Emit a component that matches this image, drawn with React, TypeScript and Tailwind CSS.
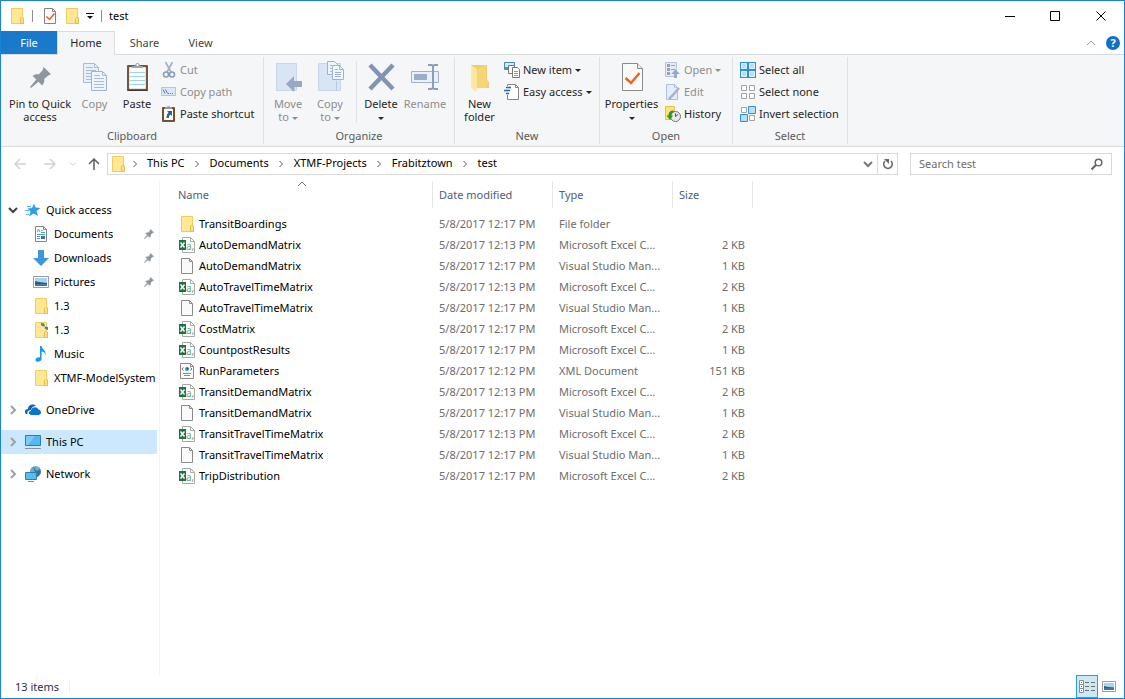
import { useState } from 'react';
import type { ReactNode } from 'react';
import clsx from 'clsx';

type FileKind = 'folder' | 'excel' | 'blank' | 'xml';

const files: { name: string; date: string; type: string; size: string; kind: FileKind }[] = [
    { name: 'TransitBoardings', date: '5/8/2017 12:17 PM', type: 'File folder', size: '', kind: 'folder' },
    { name: 'AutoDemandMatrix', date: '5/8/2017 12:13 PM', type: 'Microsoft Excel C...', size: '2 KB', kind: 'excel' },
    { name: 'AutoDemandMatrix', date: '5/8/2017 12:17 PM', type: 'Visual Studio Man...', size: '1 KB', kind: 'blank' },
    { name: 'AutoTravelTimeMatrix', date: '5/8/2017 12:13 PM', type: 'Microsoft Excel C...', size: '2 KB', kind: 'excel' },
    { name: 'AutoTravelTimeMatrix', date: '5/8/2017 12:17 PM', type: 'Visual Studio Man...', size: '1 KB', kind: 'blank' },
    { name: 'CostMatrix', date: '5/8/2017 12:17 PM', type: 'Microsoft Excel C...', size: '2 KB', kind: 'excel' },
    { name: 'CountpostResults', date: '5/8/2017 12:17 PM', type: 'Microsoft Excel C...', size: '1 KB', kind: 'excel' },
    { name: 'RunParameters', date: '5/8/2017 12:12 PM', type: 'XML Document', size: '151 KB', kind: 'xml' },
    { name: 'TransitDemandMatrix', date: '5/8/2017 12:13 PM', type: 'Microsoft Excel C...', size: '2 KB', kind: 'excel' },
    { name: 'TransitDemandMatrix', date: '5/8/2017 12:17 PM', type: 'Visual Studio Man...', size: '1 KB', kind: 'blank' },
    { name: 'TransitTravelTimeMatrix', date: '5/8/2017 12:13 PM', type: 'Microsoft Excel C...', size: '2 KB', kind: 'excel' },
    { name: 'TransitTravelTimeMatrix', date: '5/8/2017 12:17 PM', type: 'Visual Studio Man...', size: '1 KB', kind: 'blank' },
    { name: 'TripDistribution', date: '5/8/2017 12:17 PM', type: 'Microsoft Excel C...', size: '2 KB', kind: 'excel' },
];

const crumbs = ['This PC', 'Documents', 'XTMF-Projects', 'Frabitztown', 'test'];

/* ---------- icons ---------- */

function Svg({ w = 16, h = 16, children }: { w?: number; h?: number; children: ReactNode }) {
    return (
        <svg width={w} height={h} viewBox={`0 0 ${w} ${h}`} fill="none" className="shrink-0" aria-hidden="true">
            {children}
        </svg>
    );
}

const FolderIcon = () => (
    <Svg>
        <path d="M2.5 .5h11v8.500l1 1v5.500h-12z" fill="#ffe794" stroke="#f0cb5f" />
        <path d="M11.500 15.500v-5l1-1h1l1 1v5z" fill="#ffe08a" stroke="#e8bc43" />
    </Svg>
);

const SharedFolderIcon = () => (
    <Svg>
        <path d="M2.5 .5h11v8.500l1 1v5.500h-12z" fill="#ffe794" stroke="#f0cb5f" />
        <path d="M11.500 15.500v-5l1-1h1l1 1v5z" fill="#ffe08a" stroke="#e8bc43" />
        <path d="M8 1l3 .5 1 2.500-2 .5-2-1.500zM12 4.500l3 .5v3l-2-.5-1.500-1.500z" fill="#3f7fc4" />
    </Svg>
);

const BlankFileIcon = () => (
    <Svg>
        <path d="M2.5 .5h8l3 3v12h-11z" fill="#fafafa" stroke="#8a8a8a" />
        <path d="M10.500 .5v3h3" stroke="#8a8a8a" />
    </Svg>
);

const ExcelIcon = () => (
    <Svg>
        <path d="M3.500 .5h8l4 4v11h-12z" fill="#fff" stroke="#a8aaa9" />
        <path d="M11.500 .5v4h4" stroke="#a8aaa9" />
        <path d="M0 3h7v10H0z" fill="#1f7246" />
        <path d="M1.500 5.500l4 5M5.500 5.500l-4 5" stroke="#fff" strokeWidth="1.500" />
        <text x="7" y="13" fontSize="10" fill="#5fa87f" fontFamily="Noto Sans, sans-serif">a,</text>
    </Svg>
);

const XmlIcon = () => (
    <Svg>
        <path d="M1.500 .5h10l3 3v12h-13z" fill="#fafafa" stroke="#8a8a8a" />
        <path d="M11.500 .5v3h3" stroke="#8a8a8a" />
        <path d="M4.500 4.500l-1.500 1.500 1.500 1.500M11.500 4.500l1.500 1.500-1.500 1.500" stroke="#777" />
        <circle cx="8" cy="6" r="2" fill="#2ba3b5" />
        <circle cx="8.500" cy="5.500" r="1" fill="#2457a0" />
        <path d="M4 10.500h8M5 12.500h6" stroke="#8e83a8" />
    </Svg>
);

const PinShape = ({ size }: { size: number }) => (
    <svg width={size} height={size} viewBox="0 0 20 20" className="shrink-0" aria-hidden="true">
        <path
            d="M13 0L20 7 17.500 8 13.500 11.500C14 14.500 13 16 11.500 17.500L8 14 1 20 0 19 6 12 2.500 8.500C4 7 6 6.500 8.500 7L12 3z"
            fill="#8f979e"
        />
    </svg>
);

const PropertiesSmallIcon = () => (
    <Svg>
        <path d="M2.500 .5h8l3 3v12h-11z" fill="#fff" stroke="#828282" />
        <path d="M10.500 .5v3h3" stroke="#828282" />
        <path d="M4.500 8.500l3 3 5-6" stroke="#f05a1a" strokeWidth="1.500" />
    </Svg>
);

const CopyIcon = () => (
    <Svg w={32} h={32}>
        <path d="M4.500 2.500h11l4 4v15h-15z" fill="#e9effa" stroke="#a9bbd9" />
        <path d="M15.500 2.500v4h4M7 6.500h7M7 9.500h10M7 12.500h10M7 15.500h10M7 18.500h10" stroke="#a9bbd9" />
        <path d="M12.500 10.500h11l4 4v15h-15z" fill="#eef3fc" stroke="#9fb2d3" />
        <path d="M23.500 10.500v4h4M15 14.500h6M15 17.500h10M15 20.500h10M15 23.500h10M15 26.500h10" stroke="#a9bbd9" />
    </Svg>
);

const PasteIcon = () => (
    <Svg w={32} h={32}>
        <rect x="6" y="4" width="21" height="26" rx="1" fill="#7a5435" />
        <path d="M6 29h21l-1 1H7z" fill="#4d3320" />
        <path d="M8.500 6.500h16v21h-16z" fill="#fdfefe" stroke="#d8e8f1" />
        <path d="M9 11.500h15M9 15.500h15M9 19.500h15M9 23.500h15" stroke="#9fd3ec" />
        <path d="M11 7V5h3c0-4 5-4 5 0h3v2z" fill="#a3a6a8" />
        <circle cx="16.500" cy="4" r="1" fill="#fff" />
    </Svg>
);

const CutIcon = () => (
    <Svg>
        <path d="M4.500 0l5.500 10M11.500 0L6 10" stroke="#a3b1c8" strokeWidth="1.700" />
        <circle cx="5" cy="12.500" r="2.500" stroke="#8b9dbd" strokeWidth="1.600" />
        <circle cx="11" cy="12.500" r="2.500" stroke="#8b9dbd" strokeWidth="1.600" />
    </Svg>
);

const CopyPathIcon = () => (
    <Svg>
        <path d="M.5 3.500h14v8H.5z" fill="#dce7f7" stroke="#b5c3dc" />
        <path d="M2 5.500l2 4M4.500 5.500l2 4" stroke="#63769b" />
        <path d="M7 9.500h1M9 9.500h1M11 9.500h1" stroke="#63769b" />
    </Svg>
);

const PasteShortcutIcon = () => (
    <Svg>
        <rect x="1" y="1" width="13" height="15" rx="1" fill="#77502f" />
        <path d="M3 3h9v11H3z" fill="#fff" />
        <path d="M4 3V1h2c0-1 3-1 3 0h2v2z" fill="#999" />
        <path d="M6 5h5v5L9.500 8.500C8 9.500 8 10.500 8 12H5.500c0-2.500.5-4 2-5.500z" fill="#2d5fa5" />
    </Svg>
);

const MoveToIcon = () => (
    <Svg w={32} h={32}>
        <path d="M4 2h21v28H4z" fill="#d9e4f4" />
        <path d="M4.500 2.500h20v27h-20z" stroke="#c8d6ea" />
        <path d="M22.500 20v10" stroke="#b9c9e1" />
        <path d="M14 23l8-8v5h8v6h-8v5z" fill="#98a9c6" />
    </Svg>
);

const CopyToIcon = () => (
    <Svg w={32} h={32}>
        <path d="M4.500 2.500h22v27h-22z" fill="#d9e4f4" stroke="#c8d6ea" />
        <path d="M22.500 20v10" stroke="#b9c9e1" />
        <path d="M13.500 .5h7l3 3v10h-10z" fill="#eef3fc" stroke="#9fb2d3" />
        <path d="M16 4.500h4M16 7.500h5M16 10.500h3" stroke="#a9bbd9" />
        <path d="M18.500 4.500h7l4 4v10h-11z" fill="#f2f6fd" stroke="#9fb2d3" />
        <path d="M25.500 4.500v4h4M21 8.500h3M21 11.500h6M21 13.500h6M21 15.500h6" stroke="#a0b1cd" />
    </Svg>
);

const DeleteIcon = () => (
    <Svg w={32} h={32}>
        <path d="M5 4l23 24M28 4L5 28" stroke="#8194b4" strokeWidth="4.500" />
    </Svg>
);

const RenameIcon = () => (
    <Svg w={32} h={32}>
        <path d="M2.500 10.500h27v11h-27z" fill="#e9f0fa" stroke="#9fb2d0" />
        <path d="M5 13h13v6H5z" fill="#9aadcb" />
        <path d="M19 4h3c2 0 2 1 2 2v20c0 1 0 2-2 2h-3M29 4h-3c-2 0-2 1-2 2M24 26c0 1.500 0 2 2 2h3" stroke="#8b9ebd" strokeWidth="2" />
    </Svg>
);

const NewFolderIcon = () => (
    <Svg w={32} h={32}>
        <path d="M7 4h16v15l2 2v6H7z" fill="#f3ce68" />
        <path d="M7 4l6 4v19l-1 4-5-4z" fill="#ffe79b" />
        <path d="M13 8v19h9l2-6-2-2V4" fill="#f6d578" />
    </Svg>
);

const NewItemIcon = () => (
    <Svg>
        <path d="M.5 .5h10v7H.5z" fill="#cfeaf8" stroke="#4a87a8" />
        <path d="M1 5h9v2H1z" fill="#4b9b86" />
        <path d="M4.500 3.500h6v8h-6z" fill="#f6f6f6" stroke="#777" />
        <path d="M8.500 5.500h5l2 2v8h-7z" fill="#fff" stroke="#777" />
        <path d="M10 9.500h4M10 13.500h4" stroke="#7b9bd1" />
        <path d="M10 11.500h4" stroke="#d37a6a" />
    </Svg>
);

const EasyAccessIcon = () => (
    <Svg>
        <path d="M3.500 .5h8l3 3v12h-11z" fill="#fff" stroke="#858585" />
        <path d="M11.500 .5v3h3" stroke="#858585" />
        <path d="M2 3.500h5M0 6.500h6M2 9.500h3" stroke="#f5f6f7" strokeWidth="3" />
        <path d="M2 3.500h5M0 6.500h6M2 9.500h3" stroke="#2767ad" strokeWidth="1.500" />
    </Svg>
);

const PropertiesIcon = () => (
    <Svg w={32} h={32}>
        <path d="M6.500 2.500h15l5 5v22h-20z" fill="#fbfbfb" stroke="#8b8b8b" />
        <path d="M21.500 2.500v5h5" fill="#eee" stroke="#8b8b8b" />
        <path d="M9.500 17l5.500 5 8.500-10" stroke="#f26419" strokeWidth="2.500" />
    </Svg>
);

const OpenIcon = () => (
    <Svg>
        <path d="M.5 .5h11v14H.5z" fill="#e4ecf8" stroke="#b4c2da" />
        <path d="M2 2h3v3H2zM2 6h3v3H2zM2 10h3v3H2z" fill="#8fa2c2" />
        <path d="M6 3.500h4M6 7.500h4" stroke="#8fa2c2" />
        <path d="M10.500 7.500L15 12h-3v4H9v-4H6z" fill="#98a9c6" />
    </Svg>
);

const EditIcon = () => (
    <Svg>
        <path d="M1.500 .5h8l3 3v12h-11z" fill="#e4ecf8" stroke="#b0c0da" />
        <path d="M9.500 .5v3h3" stroke="#b0c0da" />
        <path d="M14 4L7 12l-3 3" stroke="#a3b4cf" strokeWidth="2.500" />
    </Svg>
);

const HistoryIcon = () => (
    <Svg>
        <path d="M.5 .5h9v13h-9z" fill="#ffe27c" stroke="#eac14b" />
        <circle cx="10.500" cy="10.500" r="5" fill="#e8e8e8" stroke="#777" />
        <path d="M10.500 7.500v3l2.500-2" stroke="#555" />
        <path d="M8.500 4.500C5 4.500 3.500 6.500 3.500 9.500H1.500L5 14l3-4.500H6.500C6.500 7.500 7.500 6.500 9 6z" fill="#2a9a2e" />
    </Svg>
);

const SelectAllIcon = () => (
    <Svg>
        <path d="M0 0h16v16H0z" fill="#2f8fdf" />
        <path d="M1.500 1.500h5v5h-5zM9.500 1.500h5v5h-5zM1.500 9.500h5v5h-5zM9.500 9.500h5v5h-5z" fill="#b9dffa" stroke="#e3f3fe" />
    </Svg>
);

const SelectNoneIcon = () => (
    <Svg>
        <path d="M1.500 1.500h5v5h-5zM9.500 1.500h5v5h-5zM1.500 9.500h5v5h-5zM9.500 9.500h5v5h-5z" fill="#fff" stroke="#a3a3a3" />
    </Svg>
);

const InvertIcon = () => (
    <Svg>
        <path d="M1.500 1.500h5v5h-5zM9.500 9.500h5v5h-5z" fill="#fff" stroke="#a3a3a3" />
        <path d="M8.500 .5h7v7h-7zM.5 8.500h7v7h-7z" fill="#b9dffa" stroke="#2f8fdf" />
    </Svg>
);

const StarIcon = () => (
    <Svg>
        <path d="M9 1.500l1.500 4 5 .5-4 3 1.500 5-4.500-2.500L4 14.500l1.500-5L2.500 6.500l4.500-.5z" fill="#2f9fe6" />
        <path d="M2 4.500h4M0 8.500h4M1 12.500h3" stroke="#5fb6ec" />
    </Svg>
);

const DocumentsIcon = () => (
    <Svg>
        <path d="M2.500 .5h8l3 3v12h-11z" fill="#fff" stroke="#848484" />
        <path d="M10.500 .5v3h3" stroke="#848484" />
        <path d="M4 6l1.500-3L7 6M8 4.500h1.500M8 6.500h4M4 8.500h8M4 10.500h3M4 12.500h3" stroke="#4d9bd5" />
        <path d="M8 10h4v3H8z" fill="#3f6e96" />
    </Svg>
);

const DownloadsIcon = () => (
    <Svg>
        <path d="M5 0h6v8h5l-8 8-8-8h5z" fill="#3d94e0" />
    </Svg>
);

const PicturesIcon = () => (
    <Svg>
        <path d="M.5 2.500h15v11H.5z" fill="#fff" stroke="#9c9c9c" />
        <path d="M2 4h12v8H2z" fill="#a7d4f5" />
        <path d="M2 7l4 1 8 1v1H2z" fill="#2f5f63" />
        <path d="M2 10h12v2H2z" fill="#3b76aa" />
    </Svg>
);

const MusicIcon = () => (
    <Svg>
        <path d="M7 0h1.500c0 3 5 4 4 9-.5-2.500-2-3.500-4-3.500V13c0 3-6 4-6 1 0-2 2.500-3 4.500-2.500z" fill="#109bf0" />
    </Svg>
);

const OneDriveIcon = () => (
    <Svg>
        <path d="M1 12C-1 10 0 7 3 7c0-4 5-6 8-3-3 0-5 2-5 4-3 0-4 2-3.500 4z" fill="#0f65b5" />
        <path d="M6 13c-3-.5-3-4 0-4 0-4 6-5 7.500-1.500 3 .5 3.500 5 .5 5.500z" fill="#0a76d3" />
    </Svg>
);

const ThisPcIcon = () => (
    <Svg>
        <path d="M.5 1.500h15v10H.5z" fill="#52b8ef" stroke="#2b7fae" />
        <path d="M1 2h9L3 11H1z" fill="#7dcbf5" />
        <path d="M0 14.500h16" stroke="#87939b" />
    </Svg>
);

const NetworkIcon = () => (
    <Svg>
        <circle cx="10.500" cy="5.500" r="5.500" fill="#6ea9ce" />
        <path d="M8 1c3 1 1 3 4 4l3-2c2 4 0 6-3 8z" fill="#39739c" />
        <path d="M.5 6.500h11v7H.5z" fill="#55bdf2" stroke="#2b7fae" />
        <path d="M3 15.500h6" stroke="#6d8ea4" />
    </Svg>
);

const fileIcons: Record<FileKind, ReactNode> = {
    folder: <FolderIcon />,
    excel: <ExcelIcon />,
    blank: <BlankFileIcon />,
    xml: <XmlIcon />,
};

const Triangle = () => (
    <svg width="6" height="3" viewBox="0 0 6 3" className="inline-block shrink-0 align-middle" aria-hidden="true">
        <path d="M0 0h6L3 3z" fill="currentColor" />
    </svg>
);

const Chevron = ({ dir, bold }: { dir: 'up' | 'down' | 'right'; bold?: boolean }) => (
    <Svg w={10} h={10}>
        <path
            d={dir === 'up' ? 'M1 7l4-4 4 4' : dir === 'down' ? 'M1 3l4 4 4-4' : 'M3 1l4 4-4 4'}
            stroke="currentColor"
            strokeWidth={bold ? 2 : 1}
        />
    </Svg>
);

/* ---------- ribbon ---------- */

function BigButton({ icon, label, width, disabled }: { icon: ReactNode; label: ReactNode; width: string; disabled?: boolean }) {
    return (
        <button type="button" disabled={disabled} className={clsx('flex flex-col items-center gap-1', width, disabled ? 'text-[#8d8d8d]' : 'text-[#262626]')}>
            <span className="flex h-8 items-center">{icon}</span>
            <span className="whitespace-nowrap leading-[13px]">{label}</span>
        </button>
    );
}

function SmallButton({ icon, label, menu, disabled }: { icon: ReactNode; label: string; menu?: boolean; disabled?: boolean }) {
    return (
        <button type="button" disabled={disabled} className={clsx('flex h-[22px] items-center gap-[3px] whitespace-nowrap', disabled ? 'text-[#8d8d8d]' : 'text-[#262626]')}>
            {icon}
            {label}
            {menu && <Triangle />}
        </button>
    );
}

function Group({ title, width, children }: { title: string; width: string; children: ReactNode }) {
    return (
        <section aria-label={title} className={clsx('my-[2px] flex shrink-0 flex-col border-r border-[#e0e1e3]', width)}>
            <div className="flex h-[72px] items-start pt-[2px]">{children}</div>
            <h2 className="text-center leading-4 text-[#5a5a5a]">{title}</h2>
        </section>
    );
}

function Ribbon() {
    return (
        <div className="flex h-[93px] border-y border-[#dadbdc] bg-[#f5f6f7]">
            <Group title="Clipboard" width="w-[263px]">
                <div className="flex pl-[3px] pt-[2px]">
                    <BigButton width="w-[72px]" icon={<PinShape size={21} />} label={<>Pin to Quick<br />access</>} />
                    <BigButton width="w-[37px]" icon={<CopyIcon />} label="Copy" disabled />
                    <BigButton width="w-[48px]" icon={<PasteIcon />} label="Paste" />
                </div>
                <div className="flex flex-col items-start">
                    <SmallButton icon={<CutIcon />} label="Cut" disabled />
                    <SmallButton icon={<CopyPathIcon />} label="Copy path" disabled />
                    <SmallButton icon={<PasteShortcutIcon />} label="Paste shortcut" />
                </div>
            </Group>
            <Group title="Organize" width="w-[191px]">
                <div className="flex h-[64px] pl-[3px] pt-[2px]">
                    <BigButton width="w-[42px]" icon={<MoveToIcon />} label={<>Move<br />to <Triangle /></>} disabled />
                    <BigButton width="w-[42px]" icon={<CopyToIcon />} label={<>Copy<br />to <Triangle /></>} disabled />
                    <span className="ml-[5px] mr-[4px] w-px bg-[#e0e1e3]" />
                    <BigButton width="w-[40px]" icon={<DeleteIcon />} label={<>Delete<br /><Triangle /></>} />
                    <BigButton width="w-[48px]" icon={<RenameIcon />} label="Rename" disabled />
                </div>
            </Group>
            <Group title="New" width="w-[145px]">
                <div className="flex pt-[2px]">
                    <BigButton width="w-[49px]" icon={<NewFolderIcon />} label={<>New<br />folder</>} />
                </div>
                <div className="flex flex-col items-start">
                    <SmallButton icon={<NewItemIcon />} label="New item" menu />
                    <SmallButton icon={<EasyAccessIcon />} label="Easy access" menu />
                </div>
            </Group>
            <Group title="Open" width="w-[133px]">
                <div className="flex pr-[2px] pt-[2px]">
                    <BigButton width="w-[63px]" icon={<PropertiesIcon />} label={<>Properties<br /><Triangle /></>} />
                </div>
                <div className="flex flex-col items-start">
                    <SmallButton icon={<OpenIcon />} label="Open" menu disabled />
                    <SmallButton icon={<EditIcon />} label="Edit" disabled />
                    <SmallButton icon={<HistoryIcon />} label="History" />
                </div>
            </Group>
            <Group title="Select" width="w-[115px]">
                <div className="flex flex-col items-start pl-[7px]">
                    <SmallButton icon={<SelectAllIcon />} label="Select all" />
                    <SmallButton icon={<SelectNoneIcon />} label="Select none" />
                    <SmallButton icon={<InvertIcon />} label="Invert selection" />
                </div>
            </Group>
        </div>
    );
}

/* ---------- window chrome ---------- */

function TitleBar() {
    return (
        <header className="flex h-[30px] items-center justify-between">
            <div className="flex items-center pl-2">
                <FolderIcon />
                <span className="ml-[7px] h-3 w-px bg-[#8f8f8f]" />
                <div className="flex items-center gap-[6px] pl-[9px]">
                    <button type="button" aria-label="Properties"><PropertiesSmallIcon /></button>
                    <button type="button" aria-label="New folder"><FolderIcon /></button>
                    <button type="button" aria-label="Customize Quick Access Toolbar">
                        <Svg w={8} h={8}>
                            <path d="M0 1.500h8" stroke="#111" />
                            <path d="M1 4h6L4 7z" fill="#111" />
                        </Svg>
                    </button>
                </div>
                <span className="mx-[7px] h-3 w-px bg-[#8f8f8f]" />
                <h1>test</h1>
            </div>
            <div className="flex h-full">
                <button type="button" aria-label="Minimize" className="flex w-[46px] items-center justify-center">
                    <Svg w={11} h={11}><path d="M1 5.500h10" stroke="#000" /></Svg>
                </button>
                <button type="button" aria-label="Maximize" className="flex w-[46px] items-center justify-center">
                    <Svg w={11} h={11}><path d="M.5 .5h9v9h-9z" stroke="#000" /></Svg>
                </button>
                <button type="button" aria-label="Close" className="flex w-[46px] items-center justify-center">
                    <Svg w={11} h={11}><path d="M.5 .5l9 9M9.500 .5l-9 9" stroke="#000" /></Svg>
                </button>
            </div>
        </header>
    );
}

function Tabs() {
    return (
        <nav className="flex h-[23px] items-stretch text-[#444]">
            <button type="button" className="w-14 bg-[#1979ca] text-white">File</button>
            {/* the open tab runs into the ribbon below it */}
            <button type="button" className="z-10 -mb-px w-[58px] border-x border-t border-[#dadbdc] bg-[#f5f6f7] pb-[2px] text-[#262626]">Home</button>
            <button type="button" className="w-[59px]">Share</button>
            <button type="button" className="w-[53px]">View</button>
            <div className="ml-auto flex items-center gap-[10px] pr-1">
                <button type="button" aria-label="Minimize the Ribbon" className="text-[#9a9a9a]"><Chevron dir="up" /></button>
                <button type="button" aria-label="Help" className="flex size-[14px] items-center justify-center rounded-full bg-[#0f6fc9] font-bold leading-none text-white">?</button>
            </div>
        </nav>
    );
}

function Arrow({ d, color }: { d: string; color: string }) {
    return <Svg w={14} h={14}><path d={d} stroke={color} strokeWidth="1.500" /></Svg>;
}

function AddressBar() {
    const [query, setQuery] = useState<string>('');

    return (
        <div className="flex h-[34px] items-center pl-3 pr-3">
            <div className="flex w-[94px] items-center">
                <button type="button" aria-label="Back"><Arrow d="M7 2L2 7l5 5M2 7h11" color="#d2d2d2" /></button>
                <button type="button" aria-label="Forward" className="ml-4"><Arrow d="M7 2l5 5-5 5M12 7H1" color="#d2d2d2" /></button>
                <button type="button" aria-label="Recent locations" className="ml-3 text-[#cfcfcf]"><Svg w={8} h={8}><path d="M1 2.500l3 3 3-3" stroke="currentColor" /></Svg></button>
                <button type="button" aria-label="Up" className="ml-[10px]"><Arrow d="M2 7l5-5 5 5M7 2v11" color="#5f5f5f" /></button>
            </div>
            <div className="flex h-[22px] flex-1 items-center border border-[#d9d9d9]">
                <span className="-mr-1 pl-[2px]"><FolderIcon /></span>
                {crumbs.map((crumb) => (
                    <span key={crumb} className="flex items-center whitespace-nowrap pb-[2px]">
                        <span className="flex w-[25px] justify-center pt-px text-[#5a5a5a]">
                            <Svg w={6} h={8}><path d="M1.500 1l3 3-3 3" stroke="currentColor" /></Svg>
                        </span>
                        <a href="#" className="text-black">{crumb}</a>
                    </span>
                ))}
                <button type="button" aria-label="Previous locations" className="ml-auto mr-1 text-[#777]"><Chevron dir="down" bold /></button>
                <button type="button" aria-label="Refresh" className="flex h-full w-5 items-center justify-center border-l border-[#d9d9d9]">
                    <Svg w={12} h={12}>
                        <path d="M3 3a4.300 4.300 0 1 0 6 0" stroke="#666" strokeWidth="1.500" />
                        <path d="M2 1h5v5z" fill="#666" />
                    </Svg>
                </button>
            </div>
            <div className="ml-3 flex h-[22px] w-[202px] items-center border border-[#d9d9d9] pr-2">
                <input
                    type="text"
                    value={query}
                    onChange={(e) => setQuery(e.target.value)}
                    aria-label="Search test"
                    placeholder="Search test"
                    className="min-w-0 flex-1 bg-transparent pl-2 outline-none placeholder:text-[#6d6d6d]"
                />
                <Svg w={12} h={12}>
                    <circle cx="7.500" cy="4.500" r="3.300" stroke="#666" strokeWidth="1.500" />
                    <path d="M5 7L.5 11.500" stroke="#666" strokeWidth="2" />
                </Svg>
            </div>
        </div>
    );
}

/* ---------- navigation pane ---------- */

function SideItem({ icon, label, pinned }: { icon: ReactNode; label: string; pinned?: boolean }) {
    return (
        <li>
            <a href="#" className="flex h-6 items-center gap-[5px] pl-8">
                {icon}
                <span className="overflow-hidden whitespace-nowrap">{label}</span>
                {pinned && <span className="ml-auto pr-[3px]"><PinShape size={10} /></span>}
            </a>
        </li>
    );
}

function SideRoot({ icon, label, open, selected }: { icon: ReactNode; label: string; open?: boolean; selected?: boolean }) {
    return (
        <a href="#" className={clsx('flex h-6 items-center pl-[7px]', selected && 'bg-[#cce8ff]')}>
            <span className={clsx('mr-[7px]', open ? 'text-[#404040]' : 'text-[#a0a0a0]')}>
                <Chevron dir={open ? 'down' : 'right'} bold />
            </span>
            {icon}
            <span className="pl-[5px]">{label}</span>
        </a>
    );
}

function Sidebar() {
    return (
        <aside className="w-[159px] shrink-0 border-r border-[#f3f3f3] pr-[2px] pt-[17px] text-black">
            <SideRoot icon={<StarIcon />} label="Quick access" open />
            <ul>
                <SideItem icon={<DocumentsIcon />} label="Documents" pinned />
                <SideItem icon={<DownloadsIcon />} label="Downloads" pinned />
                <SideItem icon={<PicturesIcon />} label="Pictures" pinned />
                <SideItem icon={<FolderIcon />} label="1.3" />
                <SideItem icon={<SharedFolderIcon />} label="1.3" />
                <SideItem icon={<MusicIcon />} label="Music" />
                <SideItem icon={<FolderIcon />} label="XTMF-ModelSystem" />
            </ul>
            <div className="flex flex-col gap-2 pt-2">
                <SideRoot icon={<OneDriveIcon />} label="OneDrive" />
                <SideRoot icon={<ThisPcIcon />} label="This PC" selected />
                <SideRoot icon={<NetworkIcon />} label="Network" />
            </div>
        </aside>
    );
}

/* ---------- file list ---------- */

function FileTable() {
    const head = 'mb-[5px] flex h-[27px] items-center border-r border-[#e5e5e5] pl-[6px] text-[#4c607a]';

    return (
        <main className="flex-1 pl-3">
            <table className="w-[581px] table-fixed border-collapse text-left">
                <colgroup>
                    <col className="w-[261px]" />
                    <col className="w-[120px]" />
                    <col className="w-[120px]" />
                    <col className="w-[80px]" />
                </colgroup>
                <thead>
                    <tr>
                        <th className="p-0 font-normal">
                            <div className={clsx(head, 'relative')}>
                                Name
                                <span className="absolute inset-x-0 -top-[2px] flex justify-center text-[#6d6d6d]"><Chevron dir="up" /></span>
                            </div>
                        </th>
                        <th className="p-0 font-normal"><div className={head}>Date modified</div></th>
                        <th className="p-0 font-normal"><div className={head}>Type</div></th>
                        <th className="p-0 font-normal"><div className={head}>Size</div></th>
                    </tr>
                </thead>
                <tbody className="text-[#6d6d6d]">
                    {files.map((file, i) => (
                        <tr key={i} className="h-[21px]">
                            <td className="p-0">
                                <div className="flex items-center gap-1 pl-[7px] text-black">
                                    {fileIcons[file.kind]}
                                    {file.name}
                                </div>
                            </td>
                            <td className="whitespace-nowrap p-0 pl-[6px]">{file.date}</td>
                            <td className="whitespace-nowrap p-0 pl-[6px]">{file.type}</td>
                            <td className="whitespace-nowrap p-0 pr-2 text-right">{file.size}</td>
                        </tr>
                    ))}
                </tbody>
            </table>
        </main>
    );
}

function StatusBar() {
    return (
        <footer className="flex h-[23px] items-center justify-between pl-[14px] pr-1">
            <span className="border-r border-[#f0f0f0] pr-[10px] leading-3 text-[#1f2f4f]">13 items</span>
            <div className="flex h-full items-center">
                <button type="button" aria-label="Details view" className="flex h-full w-[22px] items-center justify-center border border-[#2a9fd8] bg-[#cce8f6]">
                    <Svg>
                        <path d="M.5 1.500h4v4h-4zM.5 5.500h4v4h-4zM.5 9.500h4v4h-4z" fill="#fff" stroke="#8d8d8d" />
                        <path d="M6 3.500h4M12 3.500h4M6 7.500h4M12 7.500h4M6 11.500h4M12 11.500h4" stroke="#6f6f6f" />
                        <path d="M2 3h1v1H2z" fill="#2d7a4d" />
                        <path d="M2 7h1v1H2z" fill="#2d6fd0" />
                        <path d="M2 11h1v1H2z" fill="#d03020" />
                    </Svg>
                </button>
                <button type="button" aria-label="Large icons view" className="flex h-full w-[22px] items-center justify-center">
                    <Svg w={14} h={12}>
                        <path d="M.5 .5h13v10H.5z" fill="#fff" stroke="#9c9c9c" />
                        <path d="M2 2h10v7H2z" fill="#a7d4f5" />
                        <path d="M2 5l4 1 6 .5V8H2z" fill="#2f5f63" />
                        <path d="M2 7h10v2H2z" fill="#3b76aa" />
                    </Svg>
                </button>
            </div>
        </footer>
    );
}

function App() {
    return (
        <div className="flex min-h-screen flex-col border border-[#1883d7] bg-white font-['Noto_Sans',sans-serif] text-[11px] leading-4 text-black">
            <TitleBar />
            <Tabs />
            <Ribbon />
            <AddressBar />
            <div className="flex flex-1">
                <Sidebar />
                <FileTable />
            </div>
            <StatusBar />
        </div>
    );
}

export default App;
